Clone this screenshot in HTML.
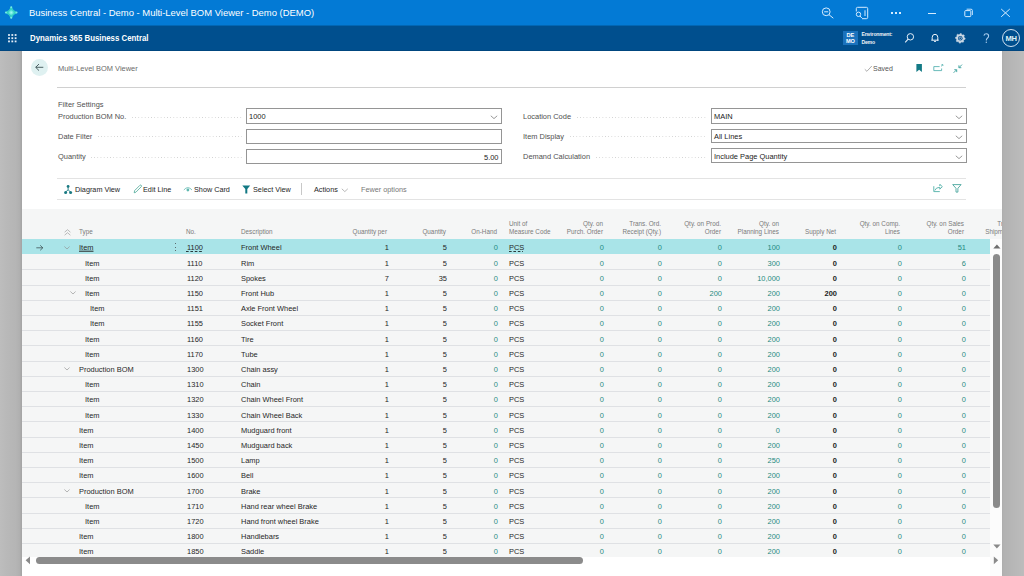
<!DOCTYPE html><html><head><meta charset="utf-8"><style>
*{margin:0;padding:0;box-sizing:border-box}
html,body{width:1024px;height:576px;overflow:hidden;background:#b8b8b8;font-family:"Liberation Sans",sans-serif;}
.a{position:absolute;white-space:nowrap}
#title{left:0;top:0;width:1024px;height:25px;background:#037ad5}
#nav{left:0;top:25px;width:1024px;height:26px;background:#004f8e}
#panel{left:22px;top:51px;width:980px;height:525px;background:#fff}
.t{font-size:8.1px;line-height:10px;height:10px;color:#262626;transform:translateY(-0.3px) scaleX(0.92);transform-origin:0 0}
.t.r{transform-origin:100% 0}
.hd{font-size:7.2px;line-height:10px;height:10px;color:#7a7a7a;transform:translateY(-0.3px) scaleX(0.88);transform-origin:0 0}
.hd.r{transform-origin:100% 0}
.r{text-align:right}
.g{color:#1f8a80}
.lbl{font-size:8.1px;line-height:10px;color:#505050;transform:translateY(-0.3px) scaleX(0.92);transform-origin:0 0}
.box{border:1px solid #959595;background:#fff;height:15px}
.row{left:22px;width:968px;height:15.2px;border-bottom:1px solid #e1e3e6}
.sel{background:#a9e4e8}
</style></head><body>
<div class="a" id="title"></div>
<div class="a" id="nav"></div>
<div class="a" style="left:0;top:25px;width:1024px;height:1px;background:#0266b3"></div>
<div class="a" style="left:0;top:50px;width:1024px;height:1px;background:#00467f"></div>
<div class="a" style="left:29px;top:7px;font-size:9.45px;line-height:12px;color:#fff">Business Central - Demo - Multi-Level BOM Viewer - Demo (DEMO)</div>
<div class="a" style="left:30px;top:32.3px;font-size:9.1px;line-height:12px;color:#fff;font-weight:bold;transform:scaleX(0.862);transform-origin:0 0">Dynamics 365 Business Central</div>
<div class="a" style="left:0;top:51px;width:22px;height:525px;background:linear-gradient(to right,#bdbdbd 0,#b9b9b9 6px,#b5b5b5 16px,#b0b0b0 19.5px,#a6a6a6 21.5px,#a9a9a9 22px)"></div>
<div class="a" id="panel"></div>
<div class="a" style="left:22px;top:209px;width:968px;height:348px;background:#f5f6f6"></div>
<div class="a" style="left:990px;top:209px;width:12px;height:30px;background:#f5f6f6"></div>
<div class="a" style="left:990px;top:239px;width:12px;height:337px;background:#fcfcfc"></div>
<div class="a t" style="left:57.5px;top:64px;color:#6a6a6a">Multi-Level BOM Viewer</div>
<div class="a" style="left:57px;top:87px;width:909px;height:1px;background:#d0d0d0"></div>
<div class="a t" style="left:57.5px;top:99.5px;color:#505050">Filter Settings</div>
<div class="a lbl" style="left:57.5px;top:112.3px">Production BOM No.</div>
<div class="a" style="left:132.265625px;top:116.6px;width:109.734375px;height:1px;background-image:linear-gradient(to right,#d2d2d2 1px,transparent 1px);background-size:3.2px 1px"></div>
<div class="a box" style="left:246px;top:108px;width:256px;height:16px"></div>
<div class="a t" style="left:249px;top:112.3px;color:#222">1000</div>
<div class="a lbl" style="left:57.5px;top:131.9px">Date Filter</div>
<div class="a" style="left:98.09375px;top:136.20000000000002px;width:143.90625px;height:1px;background-image:linear-gradient(to right,#d2d2d2 1px,transparent 1px);background-size:3.2px 1px"></div>
<div class="a box" style="left:246px;top:129px;width:256px;height:15px"></div>
<div class="a lbl" style="left:57.5px;top:152.2px">Quantity</div>
<div class="a" style="left:91.421875px;top:156.5px;width:150.578125px;height:1px;background-image:linear-gradient(to right,#d2d2d2 1px,transparent 1px);background-size:3.2px 1px"></div>
<div class="a box" style="left:246px;top:149px;width:256px;height:15px"></div>
<div class="a t r" style="left:400px;width:98.5px;top:152.6px;color:#222">5.00</div>
<div class="a lbl" style="left:522.5px;top:112.3px">Location Code</div>
<div class="a" style="left:576.875px;top:116.6px;width:130.125px;height:1px;background-image:linear-gradient(to right,#d2d2d2 1px,transparent 1px);background-size:3.2px 1px"></div>
<div class="a box" style="left:711px;top:108px;width:256px;height:16px"></div>
<div class="a t" style="left:714px;top:112.3px;color:#222">MAIN</div>
<div class="a lbl" style="left:522.5px;top:131.9px">Item Display</div>
<div class="a" style="left:569.765625px;top:136.20000000000002px;width:137.234375px;height:1px;background-image:linear-gradient(to right,#d2d2d2 1px,transparent 1px);background-size:3.2px 1px"></div>
<div class="a box" style="left:711px;top:129px;width:256px;height:14px"></div>
<div class="a t" style="left:714px;top:131.9px;color:#222">All Lines</div>
<div class="a lbl" style="left:522.5px;top:152.2px">Demand Calculation</div>
<div class="a" style="left:596.0625px;top:156.5px;width:110.9375px;height:1px;background-image:linear-gradient(to right,#d2d2d2 1px,transparent 1px);background-size:3.2px 1px"></div>
<div class="a box" style="left:711px;top:148px;width:256px;height:15px"></div>
<div class="a t" style="left:714px;top:152.2px;color:#222">Include Page Quantity</div>
<div class="a" style="left:57px;top:178px;width:909px;height:1px;background:#e3e3e3"></div>
<div class="a" style="left:57px;top:199px;width:909px;height:1px;background:#e3e3e3"></div>
<div class="a t" style="left:74.5px;top:185px;font-size:7.9px">Diagram View</div>
<div class="a t" style="left:143.3px;top:185px;font-size:7.9px">Edit Line</div>
<div class="a t" style="left:194px;top:185px;font-size:7.9px">Show Card</div>
<div class="a t" style="left:252.6px;top:185px;font-size:7.9px">Select View</div>
<div class="a" style="left:301px;top:183px;width:1px;height:12px;background:#c8c8c8"></div>
<div class="a t" style="left:313.5px;top:185px;font-size:7.9px">Actions</div>
<div class="a t" style="left:361px;top:185px;font-size:7.9px;color:#777">Fewer options</div>
<div class="a hd r" style="left:502.8px;width:100px;top:218.5px">Qty. on</div>
<div class="a hd r" style="left:560.5999999999999px;width:100px;top:218.5px">Trans. Ord.</div>
<div class="a hd r" style="left:620.8px;width:100px;top:218.5px">Qty. on Prod.</div>
<div class="a hd r" style="left:678.8px;width:100px;top:218.5px">Qty. on</div>
<div class="a hd r" style="left:800.3px;width:100px;top:218.5px">Qty. on Comp.</div>
<div class="a hd r" style="left:864.3px;width:100px;top:218.5px">Qty. on Sales</div>
<div class="a hd r" style="left:287.3px;width:100px;top:226.8px">Quantity per</div>
<div class="a hd r" style="left:345.8px;width:100px;top:226.8px">Quantity</div>
<div class="a hd r" style="left:396.6px;width:100px;top:226.8px">On-Hand</div>
<div class="a hd r" style="left:502.8px;width:100px;top:226.8px">Purch. Order</div>
<div class="a hd r" style="left:560.5999999999999px;width:100px;top:226.8px">Receipt (Qty.)</div>
<div class="a hd r" style="left:620.8px;width:100px;top:226.8px">Order</div>
<div class="a hd r" style="left:678.8px;width:100px;top:226.8px">Planning Lines</div>
<div class="a hd r" style="left:735.5999999999999px;width:100px;top:226.8px">Supply Net</div>
<div class="a hd r" style="left:800.3px;width:100px;top:226.8px">Lines</div>
<div class="a hd r" style="left:864.3px;width:100px;top:226.8px">Order</div>
<div class="a hd" style="left:79px;top:226.8px">Type</div>
<div class="a hd" style="left:185.5px;top:226.8px">No.</div>
<div class="a hd" style="left:240.5px;top:226.8px">Description</div>
<div class="a hd" style="left:508.6px;top:218.5px">Unit of</div>
<div class="a hd" style="left:508.6px;top:226.8px">Measure Code</div>
<div class="a hd r" style="left:929px;width:100px;top:218.5px">Trans. Ord.</div>
<div class="a hd r" style="left:929px;width:100px;top:226.8px">Shipment (Qty.)</div>
<div class="a sel" style="left:22px;width:968px;top:239.39999999999998px;height:15px"></div>
<svg class="a" style="left:64px;top:245.7px" width="6" height="4" viewBox="0 0 6 4"><path d="M0.4 0.5 L3 3 L5.6 0.5" fill="none" stroke="#8f8f8f" stroke-width="0.65"/></svg>
<div class="a t" style="left:79px;top:243.29999999999998px;text-decoration:underline">Item</div>
<div class="a t" style="left:186.5px;top:243.29999999999998px">1100</div>
<div class="a t" style="left:240.5px;top:243.29999999999998px">Front Wheel</div>
<div class="a t" style="left:508.6px;top:243.29999999999998px">PCS</div>
<div class="a t r" style="left:328.5px;width:60px;top:243.29999999999998px">1</div>
<div class="a t r" style="left:387px;width:60px;top:243.29999999999998px">5</div>
<div class="a t r g" style="left:437.8px;width:60px;top:243.29999999999998px">0</div>
<div class="a t r g" style="left:544px;width:60px;top:243.29999999999998px">0</div>
<div class="a t r g" style="left:601.8px;width:60px;top:243.29999999999998px">0</div>
<div class="a t r g" style="left:662px;width:60px;top:243.29999999999998px">0</div>
<div class="a t r g" style="left:720px;width:60px;top:243.29999999999998px">100</div>
<div class="a t r" style="left:776.8px;width:60px;top:243.29999999999998px;font-weight:bold;color:#222">0</div>
<div class="a t r g" style="left:841.5px;width:60px;top:243.29999999999998px">0</div>
<div class="a t r g" style="left:905.5px;width:60px;top:243.29999999999998px">51</div>
<div class="a" style="left:22px;width:968px;top:269.4px;height:1px;background:#dfe1e4"></div>
<div class="a t" style="left:85px;top:258.5px">Item</div>
<div class="a t" style="left:186.5px;top:258.5px">1110</div>
<div class="a t" style="left:240.5px;top:258.5px">Rim</div>
<div class="a t" style="left:508.6px;top:258.5px">PCS</div>
<div class="a t r" style="left:328.5px;width:60px;top:258.5px">1</div>
<div class="a t r" style="left:387px;width:60px;top:258.5px">5</div>
<div class="a t r g" style="left:437.8px;width:60px;top:258.5px">0</div>
<div class="a t r g" style="left:544px;width:60px;top:258.5px">0</div>
<div class="a t r g" style="left:601.8px;width:60px;top:258.5px">0</div>
<div class="a t r g" style="left:662px;width:60px;top:258.5px">0</div>
<div class="a t r g" style="left:720px;width:60px;top:258.5px">300</div>
<div class="a t r" style="left:776.8px;width:60px;top:258.5px;font-weight:bold;color:#222">0</div>
<div class="a t r g" style="left:841.5px;width:60px;top:258.5px">0</div>
<div class="a t r g" style="left:905.5px;width:60px;top:258.5px">6</div>
<div class="a" style="left:22px;width:968px;top:284.59999999999997px;height:1px;background:#dfe1e4"></div>
<div class="a t" style="left:85px;top:273.7px">Item</div>
<div class="a t" style="left:186.5px;top:273.7px">1120</div>
<div class="a t" style="left:240.5px;top:273.7px">Spokes</div>
<div class="a t" style="left:508.6px;top:273.7px">PCS</div>
<div class="a t r" style="left:328.5px;width:60px;top:273.7px">7</div>
<div class="a t r" style="left:387px;width:60px;top:273.7px">35</div>
<div class="a t r g" style="left:437.8px;width:60px;top:273.7px">0</div>
<div class="a t r g" style="left:544px;width:60px;top:273.7px">0</div>
<div class="a t r g" style="left:601.8px;width:60px;top:273.7px">0</div>
<div class="a t r g" style="left:662px;width:60px;top:273.7px">0</div>
<div class="a t r g" style="left:720px;width:60px;top:273.7px">10,000</div>
<div class="a t r" style="left:776.8px;width:60px;top:273.7px;font-weight:bold;color:#222">0</div>
<div class="a t r g" style="left:841.5px;width:60px;top:273.7px">0</div>
<div class="a t r g" style="left:905.5px;width:60px;top:273.7px">0</div>
<div class="a" style="left:22px;width:968px;top:299.79999999999995px;height:1px;background:#dfe1e4"></div>
<svg class="a" style="left:70px;top:291.29999999999995px" width="6" height="4" viewBox="0 0 6 4"><path d="M0.4 0.5 L3 3 L5.6 0.5" fill="none" stroke="#8f8f8f" stroke-width="0.65"/></svg>
<div class="a t" style="left:85px;top:288.9px">Item</div>
<div class="a t" style="left:186.5px;top:288.9px">1150</div>
<div class="a t" style="left:240.5px;top:288.9px">Front Hub</div>
<div class="a t" style="left:508.6px;top:288.9px">PCS</div>
<div class="a t r" style="left:328.5px;width:60px;top:288.9px">1</div>
<div class="a t r" style="left:387px;width:60px;top:288.9px">5</div>
<div class="a t r g" style="left:437.8px;width:60px;top:288.9px">0</div>
<div class="a t r g" style="left:544px;width:60px;top:288.9px">0</div>
<div class="a t r g" style="left:601.8px;width:60px;top:288.9px">0</div>
<div class="a t r g" style="left:662px;width:60px;top:288.9px">200</div>
<div class="a t r g" style="left:720px;width:60px;top:288.9px">200</div>
<div class="a t r" style="left:776.8px;width:60px;top:288.9px;font-weight:bold;color:#222">200</div>
<div class="a t r g" style="left:841.5px;width:60px;top:288.9px">0</div>
<div class="a t r g" style="left:905.5px;width:60px;top:288.9px">0</div>
<div class="a" style="left:22px;width:968px;top:315.0px;height:1px;background:#dfe1e4"></div>
<div class="a t" style="left:90px;top:304.1px">Item</div>
<div class="a t" style="left:186.5px;top:304.1px">1151</div>
<div class="a t" style="left:240.5px;top:304.1px">Axle Front Wheel</div>
<div class="a t" style="left:508.6px;top:304.1px">PCS</div>
<div class="a t r" style="left:328.5px;width:60px;top:304.1px">1</div>
<div class="a t r" style="left:387px;width:60px;top:304.1px">5</div>
<div class="a t r g" style="left:437.8px;width:60px;top:304.1px">0</div>
<div class="a t r g" style="left:544px;width:60px;top:304.1px">0</div>
<div class="a t r g" style="left:601.8px;width:60px;top:304.1px">0</div>
<div class="a t r g" style="left:662px;width:60px;top:304.1px">0</div>
<div class="a t r g" style="left:720px;width:60px;top:304.1px">200</div>
<div class="a t r" style="left:776.8px;width:60px;top:304.1px;font-weight:bold;color:#222">0</div>
<div class="a t r g" style="left:841.5px;width:60px;top:304.1px">0</div>
<div class="a t r g" style="left:905.5px;width:60px;top:304.1px">0</div>
<div class="a" style="left:22px;width:968px;top:330.2px;height:1px;background:#dfe1e4"></div>
<div class="a t" style="left:90px;top:319.3px">Item</div>
<div class="a t" style="left:186.5px;top:319.3px">1155</div>
<div class="a t" style="left:240.5px;top:319.3px">Socket Front</div>
<div class="a t" style="left:508.6px;top:319.3px">PCS</div>
<div class="a t r" style="left:328.5px;width:60px;top:319.3px">1</div>
<div class="a t r" style="left:387px;width:60px;top:319.3px">5</div>
<div class="a t r g" style="left:437.8px;width:60px;top:319.3px">0</div>
<div class="a t r g" style="left:544px;width:60px;top:319.3px">0</div>
<div class="a t r g" style="left:601.8px;width:60px;top:319.3px">0</div>
<div class="a t r g" style="left:662px;width:60px;top:319.3px">0</div>
<div class="a t r g" style="left:720px;width:60px;top:319.3px">200</div>
<div class="a t r" style="left:776.8px;width:60px;top:319.3px;font-weight:bold;color:#222">0</div>
<div class="a t r g" style="left:841.5px;width:60px;top:319.3px">0</div>
<div class="a t r g" style="left:905.5px;width:60px;top:319.3px">0</div>
<div class="a" style="left:22px;width:968px;top:345.4px;height:1px;background:#dfe1e4"></div>
<div class="a t" style="left:85px;top:334.5px">Item</div>
<div class="a t" style="left:186.5px;top:334.5px">1160</div>
<div class="a t" style="left:240.5px;top:334.5px">Tire</div>
<div class="a t" style="left:508.6px;top:334.5px">PCS</div>
<div class="a t r" style="left:328.5px;width:60px;top:334.5px">1</div>
<div class="a t r" style="left:387px;width:60px;top:334.5px">5</div>
<div class="a t r g" style="left:437.8px;width:60px;top:334.5px">0</div>
<div class="a t r g" style="left:544px;width:60px;top:334.5px">0</div>
<div class="a t r g" style="left:601.8px;width:60px;top:334.5px">0</div>
<div class="a t r g" style="left:662px;width:60px;top:334.5px">0</div>
<div class="a t r g" style="left:720px;width:60px;top:334.5px">200</div>
<div class="a t r" style="left:776.8px;width:60px;top:334.5px;font-weight:bold;color:#222">0</div>
<div class="a t r g" style="left:841.5px;width:60px;top:334.5px">0</div>
<div class="a t r g" style="left:905.5px;width:60px;top:334.5px">0</div>
<div class="a" style="left:22px;width:968px;top:360.59999999999997px;height:1px;background:#dfe1e4"></div>
<div class="a t" style="left:85px;top:349.7px">Item</div>
<div class="a t" style="left:186.5px;top:349.7px">1170</div>
<div class="a t" style="left:240.5px;top:349.7px">Tube</div>
<div class="a t" style="left:508.6px;top:349.7px">PCS</div>
<div class="a t r" style="left:328.5px;width:60px;top:349.7px">1</div>
<div class="a t r" style="left:387px;width:60px;top:349.7px">5</div>
<div class="a t r g" style="left:437.8px;width:60px;top:349.7px">0</div>
<div class="a t r g" style="left:544px;width:60px;top:349.7px">0</div>
<div class="a t r g" style="left:601.8px;width:60px;top:349.7px">0</div>
<div class="a t r g" style="left:662px;width:60px;top:349.7px">0</div>
<div class="a t r g" style="left:720px;width:60px;top:349.7px">200</div>
<div class="a t r" style="left:776.8px;width:60px;top:349.7px;font-weight:bold;color:#222">0</div>
<div class="a t r g" style="left:841.5px;width:60px;top:349.7px">0</div>
<div class="a t r g" style="left:905.5px;width:60px;top:349.7px">0</div>
<div class="a" style="left:22px;width:968px;top:375.79999999999995px;height:1px;background:#dfe1e4"></div>
<svg class="a" style="left:64px;top:367.29999999999995px" width="6" height="4" viewBox="0 0 6 4"><path d="M0.4 0.5 L3 3 L5.6 0.5" fill="none" stroke="#8f8f8f" stroke-width="0.65"/></svg>
<div class="a t" style="left:79px;top:364.9px">Production BOM</div>
<div class="a t" style="left:186.5px;top:364.9px">1300</div>
<div class="a t" style="left:240.5px;top:364.9px">Chain assy</div>
<div class="a t" style="left:508.6px;top:364.9px">PCS</div>
<div class="a t r" style="left:328.5px;width:60px;top:364.9px">1</div>
<div class="a t r" style="left:387px;width:60px;top:364.9px">5</div>
<div class="a t r g" style="left:437.8px;width:60px;top:364.9px">0</div>
<div class="a t r g" style="left:544px;width:60px;top:364.9px">0</div>
<div class="a t r g" style="left:601.8px;width:60px;top:364.9px">0</div>
<div class="a t r g" style="left:662px;width:60px;top:364.9px">0</div>
<div class="a t r g" style="left:720px;width:60px;top:364.9px">200</div>
<div class="a t r" style="left:776.8px;width:60px;top:364.9px;font-weight:bold;color:#222">0</div>
<div class="a t r g" style="left:841.5px;width:60px;top:364.9px">0</div>
<div class="a t r g" style="left:905.5px;width:60px;top:364.9px">0</div>
<div class="a" style="left:22px;width:968px;top:391.0px;height:1px;background:#dfe1e4"></div>
<div class="a t" style="left:85px;top:380.1px">Item</div>
<div class="a t" style="left:186.5px;top:380.1px">1310</div>
<div class="a t" style="left:240.5px;top:380.1px">Chain</div>
<div class="a t" style="left:508.6px;top:380.1px">PCS</div>
<div class="a t r" style="left:328.5px;width:60px;top:380.1px">1</div>
<div class="a t r" style="left:387px;width:60px;top:380.1px">5</div>
<div class="a t r g" style="left:437.8px;width:60px;top:380.1px">0</div>
<div class="a t r g" style="left:544px;width:60px;top:380.1px">0</div>
<div class="a t r g" style="left:601.8px;width:60px;top:380.1px">0</div>
<div class="a t r g" style="left:662px;width:60px;top:380.1px">0</div>
<div class="a t r g" style="left:720px;width:60px;top:380.1px">200</div>
<div class="a t r" style="left:776.8px;width:60px;top:380.1px;font-weight:bold;color:#222">0</div>
<div class="a t r g" style="left:841.5px;width:60px;top:380.1px">0</div>
<div class="a t r g" style="left:905.5px;width:60px;top:380.1px">0</div>
<div class="a" style="left:22px;width:968px;top:406.2px;height:1px;background:#dfe1e4"></div>
<div class="a t" style="left:85px;top:395.3px">Item</div>
<div class="a t" style="left:186.5px;top:395.3px">1320</div>
<div class="a t" style="left:240.5px;top:395.3px">Chain Wheel Front</div>
<div class="a t" style="left:508.6px;top:395.3px">PCS</div>
<div class="a t r" style="left:328.5px;width:60px;top:395.3px">1</div>
<div class="a t r" style="left:387px;width:60px;top:395.3px">5</div>
<div class="a t r g" style="left:437.8px;width:60px;top:395.3px">0</div>
<div class="a t r g" style="left:544px;width:60px;top:395.3px">0</div>
<div class="a t r g" style="left:601.8px;width:60px;top:395.3px">0</div>
<div class="a t r g" style="left:662px;width:60px;top:395.3px">0</div>
<div class="a t r g" style="left:720px;width:60px;top:395.3px">200</div>
<div class="a t r" style="left:776.8px;width:60px;top:395.3px;font-weight:bold;color:#222">0</div>
<div class="a t r g" style="left:841.5px;width:60px;top:395.3px">0</div>
<div class="a t r g" style="left:905.5px;width:60px;top:395.3px">0</div>
<div class="a" style="left:22px;width:968px;top:421.4px;height:1px;background:#dfe1e4"></div>
<div class="a t" style="left:85px;top:410.5px">Item</div>
<div class="a t" style="left:186.5px;top:410.5px">1330</div>
<div class="a t" style="left:240.5px;top:410.5px">Chain Wheel Back</div>
<div class="a t" style="left:508.6px;top:410.5px">PCS</div>
<div class="a t r" style="left:328.5px;width:60px;top:410.5px">1</div>
<div class="a t r" style="left:387px;width:60px;top:410.5px">5</div>
<div class="a t r g" style="left:437.8px;width:60px;top:410.5px">0</div>
<div class="a t r g" style="left:544px;width:60px;top:410.5px">0</div>
<div class="a t r g" style="left:601.8px;width:60px;top:410.5px">0</div>
<div class="a t r g" style="left:662px;width:60px;top:410.5px">0</div>
<div class="a t r g" style="left:720px;width:60px;top:410.5px">200</div>
<div class="a t r" style="left:776.8px;width:60px;top:410.5px;font-weight:bold;color:#222">0</div>
<div class="a t r g" style="left:841.5px;width:60px;top:410.5px">0</div>
<div class="a t r g" style="left:905.5px;width:60px;top:410.5px">0</div>
<div class="a" style="left:22px;width:968px;top:436.59999999999997px;height:1px;background:#dfe1e4"></div>
<div class="a t" style="left:79px;top:425.7px">Item</div>
<div class="a t" style="left:186.5px;top:425.7px">1400</div>
<div class="a t" style="left:240.5px;top:425.7px">Mudguard front</div>
<div class="a t" style="left:508.6px;top:425.7px">PCS</div>
<div class="a t r" style="left:328.5px;width:60px;top:425.7px">1</div>
<div class="a t r" style="left:387px;width:60px;top:425.7px">5</div>
<div class="a t r g" style="left:437.8px;width:60px;top:425.7px">0</div>
<div class="a t r g" style="left:544px;width:60px;top:425.7px">0</div>
<div class="a t r g" style="left:601.8px;width:60px;top:425.7px">0</div>
<div class="a t r g" style="left:662px;width:60px;top:425.7px">0</div>
<div class="a t r g" style="left:720px;width:60px;top:425.7px">0</div>
<div class="a t r" style="left:776.8px;width:60px;top:425.7px;font-weight:bold;color:#222">0</div>
<div class="a t r g" style="left:841.5px;width:60px;top:425.7px">0</div>
<div class="a t r g" style="left:905.5px;width:60px;top:425.7px">0</div>
<div class="a" style="left:22px;width:968px;top:451.79999999999995px;height:1px;background:#dfe1e4"></div>
<div class="a t" style="left:79px;top:440.9px">Item</div>
<div class="a t" style="left:186.5px;top:440.9px">1450</div>
<div class="a t" style="left:240.5px;top:440.9px">Mudguard back</div>
<div class="a t" style="left:508.6px;top:440.9px">PCS</div>
<div class="a t r" style="left:328.5px;width:60px;top:440.9px">1</div>
<div class="a t r" style="left:387px;width:60px;top:440.9px">5</div>
<div class="a t r g" style="left:437.8px;width:60px;top:440.9px">0</div>
<div class="a t r g" style="left:544px;width:60px;top:440.9px">0</div>
<div class="a t r g" style="left:601.8px;width:60px;top:440.9px">0</div>
<div class="a t r g" style="left:662px;width:60px;top:440.9px">0</div>
<div class="a t r g" style="left:720px;width:60px;top:440.9px">200</div>
<div class="a t r" style="left:776.8px;width:60px;top:440.9px;font-weight:bold;color:#222">0</div>
<div class="a t r g" style="left:841.5px;width:60px;top:440.9px">0</div>
<div class="a t r g" style="left:905.5px;width:60px;top:440.9px">0</div>
<div class="a" style="left:22px;width:968px;top:467.0px;height:1px;background:#dfe1e4"></div>
<div class="a t" style="left:79px;top:456.1px">Item</div>
<div class="a t" style="left:186.5px;top:456.1px">1500</div>
<div class="a t" style="left:240.5px;top:456.1px">Lamp</div>
<div class="a t" style="left:508.6px;top:456.1px">PCS</div>
<div class="a t r" style="left:328.5px;width:60px;top:456.1px">1</div>
<div class="a t r" style="left:387px;width:60px;top:456.1px">5</div>
<div class="a t r g" style="left:437.8px;width:60px;top:456.1px">0</div>
<div class="a t r g" style="left:544px;width:60px;top:456.1px">0</div>
<div class="a t r g" style="left:601.8px;width:60px;top:456.1px">0</div>
<div class="a t r g" style="left:662px;width:60px;top:456.1px">0</div>
<div class="a t r g" style="left:720px;width:60px;top:456.1px">250</div>
<div class="a t r" style="left:776.8px;width:60px;top:456.1px;font-weight:bold;color:#222">0</div>
<div class="a t r g" style="left:841.5px;width:60px;top:456.1px">0</div>
<div class="a t r g" style="left:905.5px;width:60px;top:456.1px">0</div>
<div class="a" style="left:22px;width:968px;top:482.2px;height:1px;background:#dfe1e4"></div>
<div class="a t" style="left:79px;top:471.3px">Item</div>
<div class="a t" style="left:186.5px;top:471.3px">1600</div>
<div class="a t" style="left:240.5px;top:471.3px">Bell</div>
<div class="a t" style="left:508.6px;top:471.3px">PCS</div>
<div class="a t r" style="left:328.5px;width:60px;top:471.3px">1</div>
<div class="a t r" style="left:387px;width:60px;top:471.3px">5</div>
<div class="a t r g" style="left:437.8px;width:60px;top:471.3px">0</div>
<div class="a t r g" style="left:544px;width:60px;top:471.3px">0</div>
<div class="a t r g" style="left:601.8px;width:60px;top:471.3px">0</div>
<div class="a t r g" style="left:662px;width:60px;top:471.3px">0</div>
<div class="a t r g" style="left:720px;width:60px;top:471.3px">200</div>
<div class="a t r" style="left:776.8px;width:60px;top:471.3px;font-weight:bold;color:#222">0</div>
<div class="a t r g" style="left:841.5px;width:60px;top:471.3px">0</div>
<div class="a t r g" style="left:905.5px;width:60px;top:471.3px">0</div>
<div class="a" style="left:22px;width:968px;top:497.4px;height:1px;background:#dfe1e4"></div>
<svg class="a" style="left:64px;top:488.9px" width="6" height="4" viewBox="0 0 6 4"><path d="M0.4 0.5 L3 3 L5.6 0.5" fill="none" stroke="#8f8f8f" stroke-width="0.65"/></svg>
<div class="a t" style="left:79px;top:486.5px">Production BOM</div>
<div class="a t" style="left:186.5px;top:486.5px">1700</div>
<div class="a t" style="left:240.5px;top:486.5px">Brake</div>
<div class="a t" style="left:508.6px;top:486.5px">PCS</div>
<div class="a t r" style="left:328.5px;width:60px;top:486.5px">1</div>
<div class="a t r" style="left:387px;width:60px;top:486.5px">5</div>
<div class="a t r g" style="left:437.8px;width:60px;top:486.5px">0</div>
<div class="a t r g" style="left:544px;width:60px;top:486.5px">0</div>
<div class="a t r g" style="left:601.8px;width:60px;top:486.5px">0</div>
<div class="a t r g" style="left:662px;width:60px;top:486.5px">0</div>
<div class="a t r g" style="left:720px;width:60px;top:486.5px">200</div>
<div class="a t r" style="left:776.8px;width:60px;top:486.5px;font-weight:bold;color:#222">0</div>
<div class="a t r g" style="left:841.5px;width:60px;top:486.5px">0</div>
<div class="a t r g" style="left:905.5px;width:60px;top:486.5px">0</div>
<div class="a" style="left:22px;width:968px;top:512.5999999999999px;height:1px;background:#dfe1e4"></div>
<div class="a t" style="left:85px;top:501.7px">Item</div>
<div class="a t" style="left:186.5px;top:501.7px">1710</div>
<div class="a t" style="left:240.5px;top:501.7px">Hand rear wheel Brake</div>
<div class="a t" style="left:508.6px;top:501.7px">PCS</div>
<div class="a t r" style="left:328.5px;width:60px;top:501.7px">1</div>
<div class="a t r" style="left:387px;width:60px;top:501.7px">5</div>
<div class="a t r g" style="left:437.8px;width:60px;top:501.7px">0</div>
<div class="a t r g" style="left:544px;width:60px;top:501.7px">0</div>
<div class="a t r g" style="left:601.8px;width:60px;top:501.7px">0</div>
<div class="a t r g" style="left:662px;width:60px;top:501.7px">0</div>
<div class="a t r g" style="left:720px;width:60px;top:501.7px">200</div>
<div class="a t r" style="left:776.8px;width:60px;top:501.7px;font-weight:bold;color:#222">0</div>
<div class="a t r g" style="left:841.5px;width:60px;top:501.7px">0</div>
<div class="a t r g" style="left:905.5px;width:60px;top:501.7px">0</div>
<div class="a" style="left:22px;width:968px;top:527.8px;height:1px;background:#dfe1e4"></div>
<div class="a t" style="left:85px;top:516.9px">Item</div>
<div class="a t" style="left:186.5px;top:516.9px">1720</div>
<div class="a t" style="left:240.5px;top:516.9px">Hand front wheel Brake</div>
<div class="a t" style="left:508.6px;top:516.9px">PCS</div>
<div class="a t r" style="left:328.5px;width:60px;top:516.9px">1</div>
<div class="a t r" style="left:387px;width:60px;top:516.9px">5</div>
<div class="a t r g" style="left:437.8px;width:60px;top:516.9px">0</div>
<div class="a t r g" style="left:544px;width:60px;top:516.9px">0</div>
<div class="a t r g" style="left:601.8px;width:60px;top:516.9px">0</div>
<div class="a t r g" style="left:662px;width:60px;top:516.9px">0</div>
<div class="a t r g" style="left:720px;width:60px;top:516.9px">200</div>
<div class="a t r" style="left:776.8px;width:60px;top:516.9px;font-weight:bold;color:#222">0</div>
<div class="a t r g" style="left:841.5px;width:60px;top:516.9px">0</div>
<div class="a t r g" style="left:905.5px;width:60px;top:516.9px">0</div>
<div class="a" style="left:22px;width:968px;top:543.0px;height:1px;background:#dfe1e4"></div>
<div class="a t" style="left:79px;top:532.1px">Item</div>
<div class="a t" style="left:186.5px;top:532.1px">1800</div>
<div class="a t" style="left:240.5px;top:532.1px">Handlebars</div>
<div class="a t" style="left:508.6px;top:532.1px">PCS</div>
<div class="a t r" style="left:328.5px;width:60px;top:532.1px">1</div>
<div class="a t r" style="left:387px;width:60px;top:532.1px">5</div>
<div class="a t r g" style="left:437.8px;width:60px;top:532.1px">0</div>
<div class="a t r g" style="left:544px;width:60px;top:532.1px">0</div>
<div class="a t r g" style="left:601.8px;width:60px;top:532.1px">0</div>
<div class="a t r g" style="left:662px;width:60px;top:532.1px">0</div>
<div class="a t r g" style="left:720px;width:60px;top:532.1px">200</div>
<div class="a t r" style="left:776.8px;width:60px;top:532.1px;font-weight:bold;color:#222">0</div>
<div class="a t r g" style="left:841.5px;width:60px;top:532.1px">0</div>
<div class="a t r g" style="left:905.5px;width:60px;top:532.1px">0</div>
<div class="a t" style="left:79px;top:547.3000000000001px">Item</div>
<div class="a t" style="left:186.5px;top:547.3000000000001px">1850</div>
<div class="a t" style="left:240.5px;top:547.3000000000001px">Saddle</div>
<div class="a t" style="left:508.6px;top:547.3000000000001px">PCS</div>
<div class="a t r" style="left:328.5px;width:60px;top:547.3000000000001px">1</div>
<div class="a t r" style="left:387px;width:60px;top:547.3000000000001px">5</div>
<div class="a t r g" style="left:437.8px;width:60px;top:547.3000000000001px">0</div>
<div class="a t r g" style="left:544px;width:60px;top:547.3000000000001px">0</div>
<div class="a t r g" style="left:601.8px;width:60px;top:547.3000000000001px">0</div>
<div class="a t r g" style="left:662px;width:60px;top:547.3000000000001px">0</div>
<div class="a t r g" style="left:720px;width:60px;top:547.3000000000001px">200</div>
<div class="a t r" style="left:776.8px;width:60px;top:547.3000000000001px;font-weight:bold;color:#222">0</div>
<div class="a t r g" style="left:841.5px;width:60px;top:547.3000000000001px">0</div>
<div class="a t r g" style="left:905.5px;width:60px;top:547.3000000000001px">0</div>
<svg class="a" style="left:3px;top:4px" width="17" height="17" viewBox="0 0 17 17"><defs><radialGradient id="lg" cx="50%" cy="50%" r="50%"><stop offset="0" stop-color="#a4fff5"/><stop offset="0.55" stop-color="#3bd8cc"/><stop offset="1" stop-color="#17b5ae"/></radialGradient></defs><path d="M8.25 3.4 Q9.7 7.1 13.4 8.55 Q9.7 10 8.25 13.7 Q6.8 10 3.1 8.55 Q6.8 7.1 8.25 3.4Z" fill="url(#lg)" stroke="#33d0c5" stroke-width="1.3" stroke-linejoin="round"/><circle cx="8.25" cy="3.3" r="1.05" fill="#74ece2"/><circle cx="8.25" cy="13.8" r="1.05" fill="#74ece2"/><circle cx="3" cy="8.55" r="1.05" fill="#74ece2"/><circle cx="13.5" cy="8.55" r="1.05" fill="#74ece2"/></svg>
<svg class="a" style="left:8.4px;top:33.8px" width="10" height="10" viewBox="0 0 10 10"><rect x="0.1" y="0.1" width="1.8" height="1.8" fill="#e6eef8"/><rect x="3.4" y="0.1" width="1.8" height="1.8" fill="#e6eef8"/><rect x="6.699999999999999" y="0.1" width="1.8" height="1.8" fill="#e6eef8"/><rect x="0.1" y="3.3000000000000003" width="1.8" height="1.8" fill="#e6eef8"/><rect x="3.4" y="3.3000000000000003" width="1.8" height="1.8" fill="#e6eef8"/><rect x="6.699999999999999" y="3.3000000000000003" width="1.8" height="1.8" fill="#e6eef8"/><rect x="0.1" y="6.5" width="1.8" height="1.8" fill="#e6eef8"/><rect x="3.4" y="6.5" width="1.8" height="1.8" fill="#e6eef8"/><rect x="6.699999999999999" y="6.5" width="1.8" height="1.8" fill="#e6eef8"/></svg>
<svg class="a" style="left:820px;top:6px" width="16" height="14" viewBox="0 0 16 14"><circle cx="6.2" cy="5.8" r="3.9" fill="none" stroke="#d6ecff" stroke-width="1"/><path d="M4.2 5.8H8.2M9 8.7L13.3 12.2" stroke="#d6ecff" stroke-width="1" fill="none"/></svg>
<svg class="a" style="left:855px;top:6px" width="15" height="14" viewBox="0 0 15 14"><path d="M1.3 5.5V2.6Q1.3 1.3 2.6 1.3H11.4Q12.7 1.3 12.7 2.6V11.4Q12.7 12.7 11.4 12.7H7" fill="none" stroke="#d6ecff" stroke-width="1"/><path d="M10 4.3V10" stroke="#d6ecff" stroke-width="1"/><circle cx="3.5" cy="8.3" r="2.2" fill="none" stroke="#d6ecff" stroke-width="1"/><path d="M5 10 L6.8 12" stroke="#d6ecff" stroke-width="1"/></svg>
<div class="a" style="left:891.3px;top:12.2px;width:1.4px;height:1.4px;background:#d6ecff"></div>
<div class="a" style="left:895.3px;top:12.2px;width:1.4px;height:1.4px;background:#d6ecff"></div>
<div class="a" style="left:899.4px;top:12.2px;width:1.4px;height:1.4px;background:#d6ecff"></div>
<div class="a" style="left:928px;top:12.7px;width:8px;height:1px;background:#d6ecff"></div>
<svg class="a" style="left:963px;top:8px" width="11" height="10" viewBox="0 0 11 10"><rect x="1.8" y="2.6" width="6" height="6" rx="0.8" fill="none" stroke="#d6ecff" stroke-width="1"/><path d="M3.6 1.2H8Q9.4 1.2 9.4 2.6V7" fill="none" stroke="#d6ecff" stroke-width="0.9"/></svg>
<svg class="a" style="left:1000px;top:8px" width="11" height="10" viewBox="0 0 11 10"><path d="M1.2 1L9.8 8.8M9.8 1L1.2 8.8" stroke="#d6ecff" stroke-width="1"/></svg>
<div class="a" style="left:843px;top:31px;width:14.5px;height:14px;background:#1a72bd"></div>
<div class="a" style="left:843px;top:33.2px;width:14.5px;font-size:5.6px;line-height:5.7px;color:#fff;font-weight:bold;text-align:center;letter-spacing:-0.2px">DE<br>MO</div>
<div class="a" style="left:861.4px;top:29.8px;font-size:5.1px;line-height:8.1px;color:#f0f4f8;font-weight:bold;letter-spacing:-0.15px">Environment:<br>Demo</div>
<svg class="a" style="left:904px;top:33px" width="11" height="11" viewBox="0 0 11 11"><circle cx="6.4" cy="3.8" r="3.2" fill="none" stroke="#e3eef8" stroke-width="1"/><path d="M4.1 6.1L1.2 9.3" stroke="#e3eef8" stroke-width="1.1"/></svg>
<svg class="a" style="left:930px;top:33px" width="10" height="10" viewBox="0 0 10 10"><path d="M2.2 7.2V4.3Q2.2 1.4 5 1.3Q7.8 1.4 7.8 4.3V7.2H1.3M8.7 7.2H7" fill="none" stroke="#eef4fa" stroke-width="1"/><path d="M4 8.2Q5 9.2 6 8.2" fill="none" stroke="#eef4fa" stroke-width="0.9"/></svg>
<svg class="a" style="left:955px;top:33.1px" width="11" height="11" viewBox="0 0 11 11"><path d="M5.30 0.40 L6.26 0.49 L6.79 1.70 L7.47 2.06 L8.76 1.84 L9.37 2.58 L8.90 3.81 L9.13 4.54 L10.20 5.30 L10.11 6.26 L8.90 6.79 L8.54 7.47 L8.76 8.76 L8.02 9.37 L6.79 8.90 L6.06 9.13 L5.30 10.20 L4.34 10.11 L3.81 8.90 L3.13 8.54 L1.84 8.76 L1.23 8.02 L1.70 6.79 L1.47 6.06 L0.40 5.30 L0.49 4.34 L1.70 3.81 L2.06 3.13 L1.84 1.84 L2.58 1.23 L3.81 1.70 L4.54 1.47Z" fill="#c8d6e4" stroke="#c8d6e4" stroke-width="0.5" stroke-linejoin="round"/><circle cx="5.3" cy="5.3" r="2.3" fill="#004f8e"/><circle cx="5.3" cy="5.3" r="1.2" fill="none" stroke="#c8d6e4" stroke-width="0.7"/></svg>
<svg class="a" style="left:981.5px;top:33px" width="9" height="11" viewBox="0 0 9 11"><path d="M1.9 2.6Q2.4 0.8 4.4 0.8Q6.6 0.8 6.6 2.9Q6.6 4.3 5.3 5.2Q4.3 6 4.3 7.6" fill="none" stroke="#a9cdee" stroke-width="1.1"/><circle cx="4.3" cy="9.3" r="0.7" fill="#a9cdee"/></svg>
<div class="a" style="left:1001.9px;top:29.2px;width:18.2px;height:18.2px;border:1px solid #cfe0f0;border-radius:50%"></div>
<div class="a" style="left:1001.9px;top:33.5px;width:18.2px;font-size:7.6px;line-height:9px;color:#dff3f6;font-weight:bold;text-align:center;letter-spacing:-0.3px">MH</div>
<div class="a" style="left:31px;top:59px;width:17.2px;height:17.2px;border-radius:50%;background:#dff1f1"></div>
<svg class="a" style="left:34px;top:62px" width="11" height="11" viewBox="0 0 11 11"><path d="M9.3 5.3H1.8M5 2L1.7 5.3L5 8.6" fill="none" stroke="#3d5256" stroke-width="0.9"/></svg>
<svg class="a" style="left:863.5px;top:64.5px" width="9" height="8" viewBox="0 0 9 8"><path d="M0.8 4.3L2.9 6.3L7.8 1" fill="none" stroke="#909090" stroke-width="0.75"/></svg>
<div class="a t" style="left:873.2px;top:64px;color:#555;font-size:7.6px">Saved</div>
<svg class="a" style="left:915.7px;top:64.2px" width="7" height="9" viewBox="0 0 7 9"><path d="M0.4 0H5.9V7.9L3.15 5.8L0.4 7.9Z" fill="#137a86"/></svg>
<svg class="a" style="left:932.5px;top:64px" width="11" height="8" viewBox="0 0 11 8"><path d="M6.6 2.6H0.8V6.6H8.6V4.5" fill="none" stroke="#45aaa8" stroke-width="0.8"/><path d="M8 2.4L9.8 0.7M8.5 0.6H9.9V2" fill="none" stroke="#45aaa8" stroke-width="0.7"/></svg>
<svg class="a" style="left:952.5px;top:63.8px" width="10" height="10" viewBox="0 0 10 10"><path d="M9 0.6L6.1 3.5M5.9 1.3V3.7H8.3M0.6 8.8L3.5 5.9M1.3 5.7H3.7V8.1" fill="none" stroke="#2f9c98" stroke-width="0.85"/></svg>
<svg class="a" style="left:954.7px;top:114.9px" width="8" height="5" viewBox="0 0 8 5"><path d="M0.8 0.8L4 3.6L7.2 0.8" fill="none" stroke="#777" stroke-width="0.75"/></svg>
<svg class="a" style="left:489.7px;top:114.9px" width="8" height="5" viewBox="0 0 8 5"><path d="M0.8 0.8L4 3.6L7.2 0.8" fill="none" stroke="#777" stroke-width="0.75"/></svg>
<svg class="a" style="left:954.7px;top:135.2px" width="8" height="5" viewBox="0 0 8 5"><path d="M0.8 0.8L4 3.6L7.2 0.8" fill="none" stroke="#777" stroke-width="0.75"/></svg>
<svg class="a" style="left:954.7px;top:154.6px" width="8" height="5" viewBox="0 0 8 5"><path d="M0.8 0.8L4 3.6L7.2 0.8" fill="none" stroke="#777" stroke-width="0.75"/></svg>
<svg class="a" style="left:63.5px;top:184.5px" width="9" height="10" viewBox="0 0 9 10"><circle cx="4.1" cy="1.5" r="1.4" fill="#1a7a82"/><path d="M4.1 2.5V4.8L1.7 7M4.1 4.8L6.5 7" fill="none" stroke="#1a7a82" stroke-width="0.9"/><circle cx="1.6" cy="7.6" r="1.5" fill="#1a7a82"/><circle cx="6.6" cy="7.6" r="1.5" fill="#1a7a82"/></svg>
<svg class="a" style="left:132.5px;top:184px" width="10" height="10" viewBox="0 0 10 10"><path d="M1.2 8.8L1.6 6.6L6.9 1.3Q7.6 0.7 8.3 1.4Q8.9 2.1 8.3 2.7L3 8.1Z" fill="none" stroke="#4aa796" stroke-width="0.8"/></svg>
<svg class="a" style="left:182.5px;top:185px" width="10" height="8" viewBox="0 0 10 8"><path d="M0.8 5Q4.8 0.2 9 5" fill="none" stroke="#5fb8b0" stroke-width="0.8"/><circle cx="4.9" cy="5" r="1.4" fill="#5fb8b0"/></svg>
<svg class="a" style="left:241.5px;top:184.5px" width="9" height="9" viewBox="0 0 9 9"><path d="M0.3 0.6H8.2L5.3 3.9V8.6H3.3V3.9Z" fill="#117883"/></svg>
<svg class="a" style="left:341px;top:187.5px" width="8" height="5" viewBox="0 0 8 5"><path d="M0.8 0.8L3.8 3.6L6.8 0.8" fill="none" stroke="#9a9a9a" stroke-width="0.7"/></svg>
<svg class="a" style="left:932.5px;top:184px" width="10" height="9" viewBox="0 0 10 9"><path d="M0.8 2.2V7.6H6.8" fill="none" stroke="#50b0a8" stroke-width="0.9"/><path d="M1.8 6.5Q2.8 3.3 6.8 3.3V5.2L9.3 2.6L6.8 0.3V2" fill="none" stroke="#50b0a8" stroke-width="0.9"/></svg>
<svg class="a" style="left:952px;top:184px" width="10" height="9" viewBox="0 0 10 9"><path d="M0.7 0.6H9.1L5.9 4.3V8.1H4V4.3Z" fill="none" stroke="#4aa69e" stroke-width="0.9"/></svg>
<svg class="a" style="left:64px;top:228.5px" width="7" height="7" viewBox="0 0 7 7"><path d="M0.6 3.2L3.5 0.7L6.4 3.2M0.6 6.2L3.5 3.7L6.4 6.2" fill="none" stroke="#a0a0a0" stroke-width="0.7"/></svg>
<svg class="a" style="left:36px;top:244.5px" width="8" height="6" viewBox="0 0 8 6"><path d="M0.3 2.8H6.8M4.2 0.3L6.8 2.8L4.2 5.3" fill="none" stroke="#3a4a4c" stroke-width="0.75"/></svg>
<div class="a" style="left:174.8px;top:243.0px;width:1px;height:1px;background:#5d6b6d"></div>
<div class="a" style="left:174.8px;top:246.51px;width:1px;height:1px;background:#5d6b6d"></div>
<div class="a" style="left:174.8px;top:250.02px;width:1px;height:1px;background:#5d6b6d"></div>
<div class="a" style="left:185.5px;top:251.2px;width:17.5px;height:1px;background-image:linear-gradient(to right,#2a3a3c 2.6px,transparent 2.6px);background-size:4.4px 1px"></div>
<div class="a" style="left:508.6px;top:251.2px;width:14px;height:1px;background-image:linear-gradient(to right,#2a3a3c 2.6px,transparent 2.6px);background-size:4.4px 1px"></div>
<svg class="a" style="left:992.5px;top:243.5px" width="8" height="5" viewBox="0 0 8 5"><path d="M0.3 4.5L3.9 0.5L7.5 4.5Z" fill="#6f6f6f"/></svg>
<div class="a" style="left:993px;top:253.7px;width:7px;height:254px;border-radius:3.5px;background:#8b8b8b"></div>
<svg class="a" style="left:992.5px;top:544px" width="8" height="5" viewBox="0 0 8 5"><path d="M0.3 0.5L3.9 4.5L7.5 0.5Z" fill="#8a8a8a"/></svg>
<svg class="a" style="left:25px;top:556px" width="6" height="9" viewBox="0 0 6 9"><path d="M5 0.5L0.6 4.3L5 8.2Z" fill="#8a8a8a"/></svg>
<div class="a" style="left:36px;top:557px;width:547px;height:7px;border-radius:3.5px;background:#8b8b8b"></div>
<svg class="a" style="left:993px;top:556px" width="6" height="9" viewBox="0 0 6 9"><path d="M0.8 0.5L5.2 4.3L0.8 8.2Z" fill="#8a8a8a"/></svg>
<div class="a" style="left:1002px;top:51px;width:22px;height:525px;background:linear-gradient(to right,#adadad 0,#b2b2b2 2px,#b6b6b6 10px,#bcbcbc 22px)"></div>
</body></html>
